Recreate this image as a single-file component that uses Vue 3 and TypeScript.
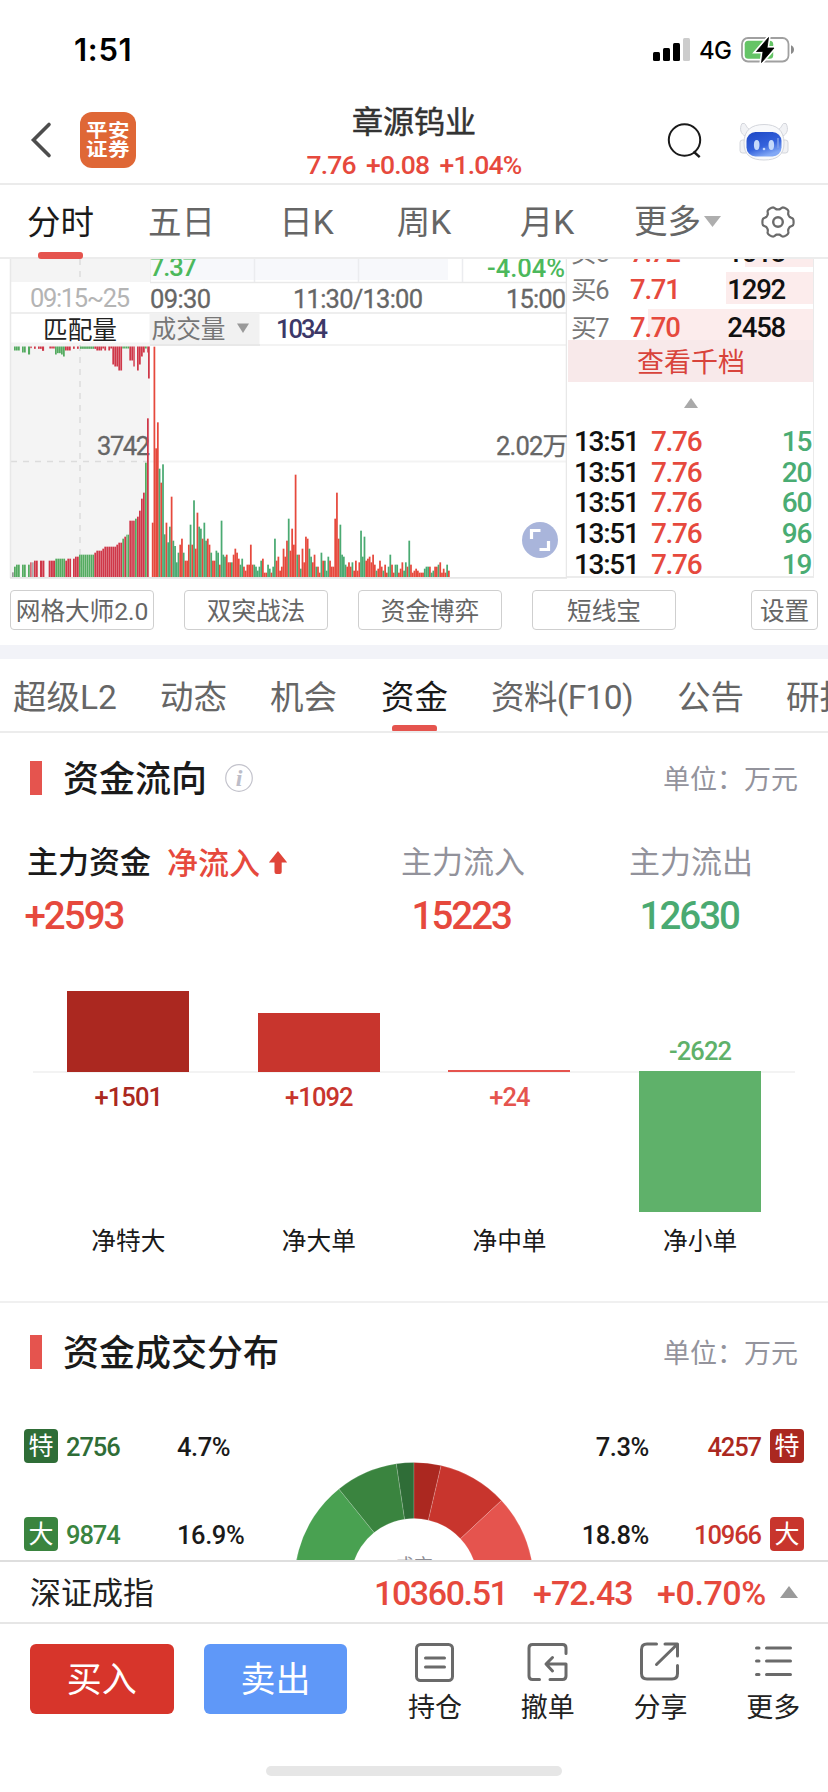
<script setup lang="ts">
interface Bar { x: number; y: number; w: number; h: number; c: string }

const RED = '#e6493d'
const GREEN = '#4aaa72'

const tabs = ['分时', '五日', '日K', '周K', '月K']
const infoTabs = ['超级L2', '动态', '机会', '资金', '资料(F10)', '公告', '研报']
const tools = ['网格大师2.0', '双突战法', '资金博弈', '短线宝']

const bids = [
  { label: '买5', price: '7.72', qty: 1018 },
  { label: '买6', price: '7.71', qty: 1292 },
  { label: '买7', price: '7.70', qty: 2458 },
]
const trades = [15, 20, 60, 96, 19]

// Per-minute volume: height in thirds of a pixel, followed by direction
const volume = (
  '163r 691r 386r 464r 325g 283r 338g 128g 163r 104g 151g 241r 109g 93g 44g 73g 97r 115r 73g 49r 49r 97r 157g 97r 230g 85r 193r ' +
  '151g 145g 115r 163g 109g 115r 97r 73g 49r 49r 79g 73g 37r 169g 67g 61g 67r 44r 44r 44g 67r 85r 73r 55r 37g 55g 31r 19r 37r 37r 97r ' +
  '37r 37g 31g 19g 31g 49g 55r 13r 13r 37g 25g 13r 31g ' +
  '115g 49r 61r 19r 31r 85r 61r 109r 175g 79r 145r 97r 307r 67g 67r 25g 85r 44r 121r 115r 85g 61g 44r 67r 31g 31r 13r 73g 49r 49g 19g 61g 49r ' +
  '31r 31r 175r 253r 115r 157g 67g 61g 37g 31r 44r 31r 44g 19r 49r 19r 44r 139g 61g 121g 49r 55r 61r 44r 67r 37r 19g 25r 49r 31r 19g 37r ' +
  '13r 31g 67g 37r 13r 37g 37g 13r 25r 44r 19g 44g 31r 109g 37r 13r 19r 25r 19r 13r 13r 13r 25g 31g 31g 31r 13g 19g 31r 31r 37g 44r 13r 25r ' +
  '13r 37g 19r'
).split(' ')
const volumeBars: Bar[] = volume.map((v, i) => {
  const h = parseInt(v) / 3
  return { x: 151.8 + i * 1.722, y: 318 - h, w: 1.75, h, c: v.endsWith('r') ? RED : GREEN }
})

// Auction segments: [from, to, height, colour], all in thirds of a pixel
type Seg = [number, number, number, string]
const R = '#cf3748'
const G = '#54ab60'
const matched: Seg[] = [
  [36, 42, 14, '#999'], [42, 48, 31, G], [48, 60, 37, G], [66, 78, 37, G], [84, 90, 37, G], [90, 96, 44, '#d66a77'], [96, 102, 44, '#aaa'],
  [102, 114, 49, R], [120, 134, 49, R], [146, 166, 49, R], [166, 196, 55, G], [196, 202, 49, R], [202, 214, 55, R], [219, 225, 55, R],
  [225, 237, 61, R], [237, 283, 67, G], [283, 289, 73, R], [289, 307, 79, R], [307, 313, 85, R], [313, 349, 91, R], [349, 355, 97, R],
  [355, 367, 103, R], [367, 373, 115, G], [373, 379, 121, R], [379, 388, 127, G], [388, 405, 169, R], [405, 411, 175, G], [411, 417, 181, R],
  [417, 423, 199, R], [423, 429, 235, R], [429, 435, 253, R], [435, 441, 343, G], [441, 447, 476, R],
]
const unmatched: Seg[] = [
  [42, 60, 12, G], [66, 78, 18, G], [84, 91, 24, G], [91, 96, 5, R], [102, 108, 7, R], [114, 126, 7, R], [126, 133, 13, R], [148, 165, 6, R],
  [165, 171, 24, G], [171, 183, 20, G], [183, 189, 24, G], [189, 195, 30, G], [195, 213, 12, R], [219, 225, 7, R], [231, 237, 7, R], [240, 283, 7, G],
  [283, 289, 7, R], [289, 307, 12, R], [307, 313, 6, R], [313, 319, 12, R], [325, 331, 12, R], [331, 337, 6, R], [337, 343, 54, R],
  [343, 355, 60, R], [355, 367, 72, R], [367, 388, 6, G], [388, 400, 42, R], [400, 405, 60, R], [411, 417, 72, R], [417, 423, 54, R],
  [423, 429, 30, R], [429, 435, 18, R], [435, 441, 6, G], [441, 444, 18, R], [444, 450, 96, R],
]
function stripes(list: Seg[], top: boolean): Bar[] {
  const out: Bar[] = []
  for (const [a, b, h3, c] of list) {
    const n = Math.max(1, Math.round((b - a) / 6))
    const step = (b - a) / 3 / n
    for (let i = 0; i < n; i++) {
      out.push({ x: a / 3 + i * step, y: top ? 87.5 : 318 - h3 / 3, w: step - 0.25, h: h3 / 3, c })
    }
  }
  return out
}
const auctionBars = [...stripes(matched, false), ...stripes(unmatched, true)]

const flows = [
  { name: '净特大', value: 1501, h: 81, c: '#ab2820' },
  { name: '净大单', value: 1092, h: 59, c: '#c8352d' },
  { name: '净中单', value: 24, h: 2, c: '#e5544e' },
  { name: '净小单', value: -2622, h: 141, c: '#5fb16a' },
]

const rows = [
  { tag: '特', out: 2756, outPct: '4.7%', inPct: '7.3%', inn: 4257, g: '#2f6d37', r: '#ab2820' },
  { tag: '大', out: 9874, outPct: '16.9%', inPct: '18.8%', inn: 10966, g: '#3a843f', r: '#c8352d' },
]

function arc(a0: number, a1: number): string {
  const p = (r: number, a: number) => {
    const t = (a * Math.PI) / 180
    return `${(120 + r * Math.sin(t)).toFixed(2)} ${(120 - r * Math.cos(t)).toFixed(2)}`
  }
  return `M${p(119.6, a0)}A119.6 119.6 0 0 1 ${p(119.6, a1)}L${p(63.5, a1)}A63.5 63.5 0 0 0 ${p(63.5, a0)}Z`
}
const slices = [
  { d: arc(-110, -38.9), c: '#49a151' },
  { d: arc(-38.9, -8.5), c: '#3a843f' },
  { d: arc(-8.5, 0), c: '#2f6d37' },
  { d: arc(0, 13.1), c: '#ab2820' },
  { d: arc(13.1, 47), c: '#c8352d' },
  { d: arc(47, 110), c: '#e5544e' },
]

const gear = 'M' + Array.from({ length: 120 }, (_, i) => {
  const t = (i * Math.PI) / 60
  const r = 14 + 1.6 * Math.tanh(2 * Math.cos(6 * t) + 0.5)
  return `${(17 + r * Math.cos(t)).toFixed(2)} ${(17 + r * Math.sin(t)).toFixed(2)}`
}).join('L') + 'Z'
</script>

<template>
  <div class="screen">
    <div class="status">
      <span class="clock">1:51</span>
      <svg class="sys" width="150" height="30" viewBox="0 0 150 30">
        <rect x="3" y="18" width="7" height="9" rx="1.5" />
        <rect x="13" y="14" width="7" height="13" rx="1.5" />
        <rect x="23" y="9" width="7" height="18" rx="1.5" />
        <rect x="33" y="4" width="7" height="23" rx="1.5" fill="#ccc" />
        <text x="49" y="25" class="net" textLength="33">4G</text>
        <rect x="92" y="4" width="46.5" height="23.5" rx="6" fill="#fff" stroke="#a0a0a0" stroke-width="1.8" />
        <rect x="94.7" y="6.8" width="28.5" height="18" rx="3.5" fill="#65c466" />
        <path d="M141 11.3c4 1.500 4 7.200 0 8.800z" fill="#8a8a8a" />
        <path d="M118.500 3.500 106.500 17.500h6.500L111.500 28.500l12.500-14.500h-7z" stroke="#fff" stroke-width="4" />
        <path d="M118.500 3.500 106.500 17.500h6.500L111.500 28.500l12.500-14.500h-7z" stroke="#000" stroke-width=".8" />
      </svg>
    </div>

    <header class="head">
      <div class="head-left">
        <svg class="back" width="22" height="38" viewBox="0 0 22 38"><path d="M19 3.500 3.500 19 19 34.500" fill="none" stroke="#4d4d4d" stroke-width="3.600" stroke-linecap="round" /></svg>
        <div class="logo"><span>平安</span><span>证券</span></div>
      </div>
      <div class="head-mid">
        <div class="name">章源钨业</div>
        <div class="quote">7.76 +0.08 +1.04%</div>
      </div>
      <div class="head-right">
        <svg width="36" height="38" viewBox="0 0 36 38"><g fill="none" stroke="#1a1a1a" stroke-width="2"><circle cx="17.500" cy="18" r="15.700" /><path d="m26.500 29.500 6.200 5.700" stroke-width="2.400" /></g></svg>
        <svg class="bot" width="52" height="42" viewBox="0 0 52 42">
          <defs>
            <linearGradient id="visor" x1="0" y1="0" x2=".5" y2="1"><stop offset="0" stop-color="#1d47c4" /><stop offset=".65" stop-color="#3462dc" /><stop offset="1" stop-color="#82a8f5" /></linearGradient>
          </defs>
          <g fill="#f1f2f5" stroke="#cfd1d8" stroke-width=".9">
            <rect x="2" y="19" width="8" height="13" rx="2.500" /><rect x="42" y="19" width="8" height="13" rx="2.500" />
            <path d="M4 2.500C1 8 3 13 7 15l7-6C9 9 8.500 4 6.500 2.500zM48 2.500C51 8 49 13 45 15l-7-6c5 0 5.500-5 7.500-6.500z" />
            <path d="M26 3.500c13 0 20 6 20 18.500 0 12-7 17-20 17S6 34 6 22C6 9.500 13 3.500 26 3.500z" fill="#f8f9fb" />
          </g>
          <rect x="8.500" y="11" width="35" height="24.500" rx="9" fill="url(#visor)" />
          <g fill="#c5d9fa"><ellipse cx="18.700" cy="24" rx="2.800" ry="5" /><ellipse cx="33.300" cy="24" rx="2.800" ry="5" /><circle cx="26" cy="28" r="1.300" /></g>
          <path d="M40 17v10" stroke="#7f9ee8" stroke-width="1.500" />
        </svg>
      </div>
    </header>

    <nav class="tabs">
      <div v-for="(t, i) in tabs" :key="t" class="tab" :class="{ on: i === 0 }">{{ t }}</div>
      <div class="tab more">更多<svg width="17" height="11" viewBox="0 0 17 11"><path d="M0 0h17L8.500 11z" fill="#aeaeae" /></svg></div>
      <svg class="gear" width="34" height="34" viewBox="0 0 34 34"><g fill="none" stroke="#6b6b6b" stroke-width="2.200"><path :d="gear" stroke-linejoin="round" /><circle cx="17" cy="17" r="4.800" stroke-width="2.400" /></g></svg>
    </nav>

    <section class="market">
      <svg class="chart" width="567" height="320" viewBox="0 0 567 320">
        <rect x="11" y="0" width="139" height="23" fill="#f4f4f4" />
        <rect x="150" y="0" width="298" height="21" fill="#f7f8fb" />
        <path d="M254.500 0v23M358.500 0v23M462.500 0v23" stroke="#ebecef" stroke-width="1.500" />
        <path d="M150.500 0v23" stroke="#eee" />
        <rect x="11" y="85" width="139" height="233" fill="#f4f4f4" />
        <path d="M80 0v23M80 86v232M11 202.500h139" stroke="#dcdcdc" stroke-width="1.500" stroke-dasharray="6 6" fill="none" />
        <path d="M150 23.500h416M11 54h555" stroke="#e9e9e9" stroke-width="1.500" />
        <path d="M11 84.500h139M260 86h306M150 202.500h416" stroke="#f3f3f3" stroke-width="2" />
        <rect x="149.500" y="54" width="110" height="31" fill="#f1f1f1" />
        <path d="M150 86h110" stroke="#e8e8e8" stroke-width="2" />
        <path d="M237 64.500h12l-6 9.500z" fill="#999" />
        <text x="97" y="196" class="num g6" font-size="25.500" textLength="53">3742</text>
        <rect v-for="(b, i) in auctionBars" :key="'a' + i" :x="b.x" :y="b.y" :width="b.w" :height="b.h" :fill="b.c" />
        <rect v-for="(b, i) in volumeBars" :key="'v' + i" :x="b.x" :y="b.y" :width="b.w" :height="b.h" :fill="b.c" />
        <path d="M10.500 0v319M566.500 0v319" stroke="#e8e8e8" stroke-width="1.500" />
        <path d="M10 318.800h557" stroke="#e6e6e6" stroke-width="1.800" />
        <g class="num" font-size="25.500">
          <text x="150" y="16.500" fill="#4cb85c" textLength="47">7.37</text>
          <text x="487" y="18" fill="#4cb85c" textLength="78">-4.04%</text>
          <text x="30" y="47.500" fill="#b4b4b4" class="thin" textLength="100">09:15~25</text>
          <text x="150" y="48.500" class="g6" textLength="61">09:30</text>
          <text x="293" y="48.500" class="g6" textLength="130">11:30/13:00</text>
          <text x="506" y="48.500" class="g6" textLength="60">15:00</text>
          <text x="276" y="78.500" fill="#3c3868" textLength="52">1034</text>
          <text x="496" y="196" class="g6" textLength="72">2.02万</text>
        </g>
        <text x="43" y="79.500" font-size="24.700" fill="#222" textLength="74">匹配量</text>
        <text x="151.500" y="79" font-size="24.700" fill="#777" textLength="74">成交量</text>
        <circle cx="540" cy="281" r="18" fill="#a9b5db" />
        <path d="M531.500 280v-8.500h9M548.500 282v8.500h-9" fill="none" stroke="#fff" stroke-width="3.200" />
      </svg>
      <div class="book">
        <div class="bids">
          <div v-for="b in bids" :key="b.label" class="bid">
            <i :style="{ width: b.qty * 0.0672 + 'px' }"></i>
            <span class="bl">{{ b.label }}</span><span class="bp">{{ b.price }}</span><span class="bq">{{ b.qty }}</span>
          </div>
        </div>
        <div class="all">查看千档</div>
        <div class="up"><svg width="14" height="10" viewBox="0 0 14 10"><path d="M7 0l7 10H0z" fill="#a9a9a9" /></svg></div>
        <div v-for="(q, i) in trades" :key="i" class="trade"><span class="tt">13:51</span><span class="bp">7.76</span><span class="tq">{{ q }}</span></div>
      </div>
    </section>

    <div class="tools">
      <button v-for="t in tools" :key="t">{{ t }}</button>
      <button class="set">设置</button>
    </div>

    <nav class="info">
      <div v-for="(t, i) in infoTabs" :key="t" class="itab" :class="{ on: i === 3, tight: t.includes('(') }">{{ t }}</div>
    </nav>

    <section class="flow">
      <div class="title">
        <b></b><h2>资金流向</h2>
        <svg width="30" height="30" viewBox="0 0 30 30"><circle cx="15" cy="15" r="13.300" fill="none" stroke="#c3c3cc" stroke-width="1.200" /><text x="15" y="23" text-anchor="middle" class="ital">i</text></svg>
        <em>单位：万元</em>
      </div>
      <div class="sums">
        <div class="sum"><div class="sl dark">主力资金<span class="in">净流入</span><svg width="18" height="24" viewBox="0 0 18 24"><path d="M9 0l9.200 11.500h-5.500V21q0 2-2 2H7.500q-2 0-2-2v-9.500H-.2z" fill="#e0453a" /></svg></div><div class="sv">+2593</div></div>
        <div class="sum"><div class="sl">主力流入</div><div class="sv pad">15223</div></div>
        <div class="sum"><div class="sl">主力流出</div><div class="sv pad green">12630</div></div>
      </div>
      <div class="bars">
        <div v-for="f in flows" :key="f.name" class="col" :class="{ neg: f.value < 0 }">
          <div class="upper"><span v-if="f.value < 0" class="val" :style="{ color: f.c }">{{ f.value }}</span><div v-else class="bar" :style="{ height: f.h + 'px', background: f.c }"></div></div>
          <div class="lower"><div v-if="f.value < 0" class="bar" :style="{ height: f.h + 'px', background: f.c }"></div><span v-else class="val" :style="{ color: f.c }">+{{ f.value }}</span></div>
          <div class="cat">{{ f.name }}</div>
        </div>
      </div>
    </section>

    <section class="dist">
      <div class="title"><b></b><h2>资金成交分布</h2><em>单位：万元</em></div>
      <div class="grid">
        <div class="side">
          <div v-for="r in rows" :key="r.tag" class="drow"><span class="tag" :style="{ background: r.g }">{{ r.tag }}</span><span class="amt" :style="{ color: r.g }">{{ r.out }}</span><span class="pct">{{ r.outPct }}</span></div>
        </div>
        <svg class="donut" width="240" height="98" viewBox="0 0 240 98">
          <path v-for="s in slices" :key="s.d" :d="s.d" :fill="s.c" stroke="#fff" stroke-opacity=".25" stroke-width=".7" />
          <text x="120" y="110.500" text-anchor="middle" font-size="19" fill="#8d8d94">成交</text>
        </svg>
        <div class="side right">
          <div v-for="r in rows" :key="r.tag" class="drow"><span class="pct">{{ r.inPct }}</span><span class="amt" :style="{ color: r.r }">{{ r.inn }}</span><span class="tag" :style="{ background: r.r }">{{ r.tag }}</span></div>
        </div>
      </div>
    </section>

    <div class="index">
      <span class="iname">深证成指</span>
      <span class="iv a">10360.51</span><span class="iv b">+72.43</span><span class="iv c">+0.70%</span>
      <svg width="18" height="12" viewBox="0 0 18 12"><path d="M9 0l9 12H0z" fill="#9a9a9a" /></svg>
    </div>

    <footer class="foot">
      <button class="buy">买入</button>
      <button class="sell">卖出</button>
      <div class="act"><svg width="42" height="42" viewBox="0 0 42 42"><rect x="2.500" y="2.500" width="36" height="36" rx="4" /><path d="M11.500 16h19M11.500 25h19" /></svg>持仓</div>
      <div class="act"><svg width="42" height="42" viewBox="0 0 42 42"><path d="M39 11.500V6q0-3.500-3.500-3.500h-30Q2 2.500 2 6v28q0 3.500 3.500 3.500h7M23 37.500h12.500q3.500 0 3.500-3.500V22H20M25.500 15.500 19 22l6.500 7" /></svg>撤单</div>
      <div class="act"><svg width="42" height="42" viewBox="0 0 42 42"><path d="M17.500 2H8Q2.500 2 2.500 7.500v24Q2.500 37 8 37h25q5.500 0 5.500-5.500v-8M26 2h12.500v12M38 2.500 17.500 22.500" /></svg>分享</div>
      <div class="act"><svg width="42" height="42" viewBox="0 0 42 42"><path d="M4.500 6h2.500M14.500 6h24M4.500 19h2.500M14.500 19h24M4.500 32.500h2.500M14.500 32.500h24" /></svg>更多</div>
    </footer>
    <div class="home"><i></i></div>
  </div>
</template>

<style>
body { margin: 0; background: #fff; }
</style>

<style scoped>
.screen {
  width: 828px; height: 1792px; overflow: hidden; background: #fff; color: #1a1a1a;
  font-family: Roboto, "Noto Sans CJK SC", sans-serif; display: flex; flex-direction: column;
}
.screen * { box-sizing: border-box; }
.screen > * { flex: none; }
button { font: inherit; padding: 0; white-space: nowrap; }
svg { display: block; overflow: hidden; }

.status { height: 100px; display: flex; justify-content: space-between; align-items: flex-start; padding: 34px 28px 0 74px; }
.clock { font: 600 31px/32px Inter, sans-serif; color: #000; letter-spacing: .7px; }
.net { font: 500 24px Inter, sans-serif; }

.head { height: 85px; display: grid; grid-template-columns: 280px 268px 280px; border-bottom: 2px solid #ebebeb; }
.head-left { display: flex; padding: 12px 0 0 30px; }
.back { margin: 9px 28px 0 0; }
.logo { width: 56px; height: 56px; border-radius: 12px; background: #df6736; color: #fff; display: flex; flex-direction: column; align-items: center; justify-content: center; font-weight: 700; font-size: 21.500px; line-height: 19.500px; letter-spacing: .5px; }
.logo span { transform: scaleY(.86); }
.head-mid { text-align: center; }
.name { font-size: 31px; line-height: 36px; margin-top: 5px; color: #333; -webkit-text-stroke: .5px #333; white-space: nowrap; }
.quote { font-size: 26.500px; font-weight: 500; line-height: 30px; margin-top: 9px; color: #e6493d; letter-spacing: -.8px; word-spacing: 4.500px; white-space: nowrap; }
.head-right { display: flex; padding: 21.500px 0 0 119px; }
.bot { margin: -1px 0 0 35px; }

.tabs { height: 74px; display: grid; grid-template-columns: 121px 121px 129px 106px 140px 144px 1fr; border-bottom: 2px solid #ececec; font-size: 33.500px; line-height: 75px; color: #666; }
.tab { text-align: center; position: relative; }
.tab.on, .itab.on { color: #1a1a1a; }
.tab.on::after { content: ""; position: absolute; left: 38px; top: 67px; width: 45px; height: 7px; border-radius: 3px; background: #e5544e; }
.more { display: flex; align-items: center; padding-left: 17px; height: 73px; gap: 3px; }
.gear { margin-top: 19.500px; margin-left: -.5px; }

.market { height: 320px; display: flex; overflow: hidden; }
.chart { flex: none; }
.num { font-weight: 500; }
.thin { font-weight: 400; }
.g6 { fill: #666; font-weight: 400; stroke: #666; stroke-width: .3px; }
.book { width: 247px; height: 319px; border-right: 1px solid #eaeaea; border-bottom: 2px solid #ececec; }
.bids { height: 81px; overflow: hidden; display: flex; flex-direction: column; justify-content: flex-end; }
.bid { flex: none; height: 32px; margin-bottom: 5px; display: flex; position: relative; font-size: 27.500px; line-height: 32px; align-items: center; letter-spacing: -1.200px; font-weight: 500; }
.bid:last-child { margin-bottom: -2px; height: 33px; }
.bid i { position: absolute; right: 0; top: 0; bottom: 0; background: #fcecec; }
.bid span { position: relative; top: 2px; }
.bl { width: 59px; padding-left: 4px; color: #777; font-weight: 400; font-size: 25.500px; }
.bp { width: 80px; padding-left: 3px; color: #e6493d; }
.bq { width: 84px; text-align: right; color: #111; margin-left: -5px; }
.bid .bp { padding-left: 4px; }
.all { height: 42px; margin-left: 1px; background: #f8e9ea; color: #d8433b; font-size: 27px; line-height: 46px; text-align: center; padding-left: 1px; }
.up { height: 45px; padding: 15.500px 0 0 117px; }
.trade { height: 30.700px; line-height: 30.700px; display: flex; font-size: 28px; font-weight: 500; letter-spacing: -1.300px; }
.trade .tt { width: 81px; padding-left: 7px; color: #111; letter-spacing: -1.300px; }
.trade .tq { flex: 1; text-align: right; padding-right: 2px; color: #4aac73; }

.tools { height: 80px; padding: 11px 10px 0; display: flex; gap: 30px; border-bottom: 14px solid #f2f3f8; }
.tools button { width: 144px; height: 40px; border: 1.500px solid #cfcfcf; border-radius: 4px; background: #fff; color: #666; font-size: 24.700px; line-height: 38px; letter-spacing: -.1px; padding-top: 2px; }
.tools .set { width: 67px; margin-left: auto; }

.info { height: 74px; padding-left: 13px; display: grid; grid-template-columns: 147px 110px 111px 110px 186px 109px 80px; border-bottom: 2px solid #ececec; font-size: 33.500px; line-height: 77px; color: #666; overflow: hidden; white-space: nowrap; }
.itab { position: relative; }
.itab.tight { letter-spacing: -.6px; }
.itab.on::after { content: ""; position: absolute; left: 11px; top: 66px; width: 45px; height: 7px; border-radius: 3px; background: #e5544e; }

.flow { height: 568px; }
.title { display: flex; height: 94px; align-items: center; padding: 0 30px 0 30px; }
.title b { width: 12px; height: 34px; background: #e5544e; margin-top: -4px; }
.title h2 { margin: 0 0 0 21px; font-size: 36px; line-height: 40px; font-weight: 500; white-space: nowrap; }
.title svg { margin: -4px 0 0 17px; }
.title em { margin-left: auto; font-style: normal; font-size: 27px; line-height: 30px; color: #93939c; }
.ital { font: italic 700 24px "Liberation Serif", serif; fill: #bdbdc8; }
.sums { display: grid; grid-template-columns: 374px 228px 226px; height: 119px; }
.sl { display: flex; align-items: center; height: 44px; margin-top: 14px; padding-left: 27px; font-size: 31px; line-height: 44px; color: #92929b; white-space: nowrap; }
.sl.dark { color: #1a1a1a; font-weight: 500; }
.in { color: #e6493d; margin: 2px 9px 0 16px; }
.sv { font-size: 38.500px; font-weight: 500; line-height: 46px; padding-left: 24.500px; margin-top: 7.500px; color: #e6493d; letter-spacing: -2px; }
.sv.pad { padding-left: 37.500px; }
.sv.green { color: #4aaa72; }
.bars { display: grid; grid-template-columns: repeat(4, 190.600px); height: 355px; margin: 0 0 0 33px; width: 762px; }
.upper { height: 127px; border-bottom: 2px solid #f3f3f3; display: flex; flex-direction: column; justify-content: flex-end; align-items: center; }
.lower { height: 154px; display: flex; flex-direction: column; align-items: center; }
.bar { width: 122px; margin-bottom: -1px; }
.lower .bar { margin-top: -2px; flex: none; position: relative; }
.val { font-size: 25.500px; font-weight: 500; line-height: 28px; letter-spacing: -.9px; }
.lower .val { margin-top: 10px; }
.upper .val { margin-bottom: 6px; }
.cat { text-align: center; font-size: 24.700px; line-height: 30px; }

.dist { height: 259px; border-top: 2px solid #f0f0f0; overflow: hidden; }
.dist .title { height: 100px; }
.dist .title b { margin-top: -2px; }
.dist .title h2, .dist .title em { margin-top: 2px; }
.grid { display: grid; grid-template-columns: 294px 240px 294px; }
.side { padding-top: 26px; }
.drow { display: flex; height: 34px; margin-bottom: 54px; align-items: center; padding: 0 24px; font-size: 25.500px; line-height: 34px; font-weight: 500; letter-spacing: -1.100px; }
.tag { width: 34px; height: 34px; border-radius: 4px; color: #fff; font-size: 25px; font-weight: 400; text-align: center; letter-spacing: 0; line-height: 36px; }
.side .amt { width: 119px; padding: 2px 0 0 8px; }
.side .pct { padding-top: 2px; letter-spacing: -.4px; }
.right .drow { justify-content: flex-end; }
.right .amt { width: 121px; padding: 2px 9px 0 0; text-align: right; }
.donut { margin-top: 59px; }

.index { height: 64px; border-top: 2px solid #dedede; border-bottom: 2px solid #e6e6e6; display: flex; align-items: center; background: #fff; padding-left: 30px; }
.iname { font-size: 31px; line-height: 62px; width: 344px; color: #222; padding-top: 3px; }
.iv { font-size: 34px; font-weight: 500; line-height: 62px; color: #e6493d; letter-spacing: -1px; padding-top: 2px; }
.iv.a { width: 159px; letter-spacing: -1.400px; }
.iv.b { width: 124px; }
.iv.c { width: 123px; letter-spacing: -.4px; }

.foot { height: 122px; display: flex; padding: 20px 0 0 30px; }
.foot button { width: 144px; height: 70px; border: 0; border-radius: 6px; color: #fff; font-size: 35px; line-height: 74px; margin-right: 30px; }
.buy { background: #d7352b; }
.sell { background: #5f98f8; }
.act { width: 113px; padding-left: 3px; display: flex; flex-direction: column; align-items: center; font-size: 27px; line-height: 30px; color: #222; }
.act svg { margin: -2px 0 9px; fill: none; stroke: #6a6a6a; stroke-width: 3; stroke-linecap: round; stroke-linejoin: round; }
.home { padding-top: 20px; display: flex; justify-content: center; }
.home i { width: 296px; height: 10px; border-radius: 5px; background: #e6e6e6; }
</style>
